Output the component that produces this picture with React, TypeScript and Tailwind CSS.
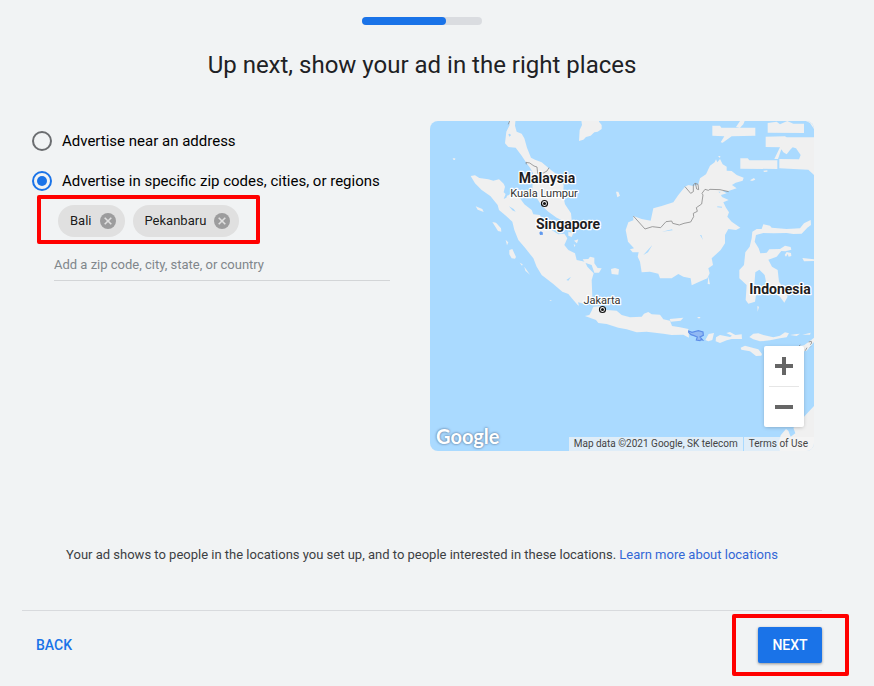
import { useState } from "react";

type Option = { id: string; label: string };

const options: Option[] = [
  { id: "address", label: "Advertise near an address" },
  { id: "regions", label: "Advertise in specific zip codes, cities, or regions" },
];

function Chip({ name, onRemove }: { name: string; onRemove: () => void }) {
  return (
    <li className="flex h-8 items-center gap-2 rounded-full bg-[#e0e0e0] pl-3 pr-[9px] text-[13px] text-black/90">
      {name}
      <button type="button" aria-label={`Remove ${name}`} onClick={onRemove} className="size-4">
        <svg viewBox="0 0 16 16" className="size-4">
          <circle cx="8" cy="8" r="8" fill="#9c9c9d" />
          <path d="M4.7 4.7l6.6 6.6M11.3 4.7l-6.6 6.6" stroke="#e0e0e0" strokeWidth="1.6" />
        </svg>
      </button>
    </li>
  );
}

function Capital({ x, y }: { x: number; y: number }) {
  return (
    <g>
      <circle cx={x} cy={y} r="3" fill="#fff" stroke="#111" strokeWidth="1.2" />
      <circle cx={x} cy={y} r="1.5" fill="#111" />
    </g>
  );
}

function MapDrawing() {
  return (
    <svg
      viewBox="430 121 384 330"
      preserveAspectRatio="xMidYMid slice"
      className="block h-full w-full font-[Roboto,sans-serif]"
      role="img"
      aria-label="Map of Indonesia and Malaysia"
    >
      <g transform="translate(425 115) scale(0.33333)" fill="#f0f0f0">
        {/* Malay peninsula */}
        <path d="M250 10L254 30L244 50L240 85L250 96L272 98L290 122L303 142L316 160L324 175L322 225L336 250L350 272L370 290L395 308L415 318L440 315L438 295L420 268L414 240L416 210L404 185L375 163L350 142L330 134L318 128L306 98L298 70L290 56L275 50L270 32L272 10Z" />
        <path d="M250 58l5 -2 3 5 -5 4z" fill="#aadaff" />
        {/* Vietnam */}
        <path d="M468 10L471 30L464 45L462 78L475 74L483 66L497 62L508 52L518 50L530 42L530 30L522 20L522 10Z" />
        {/* Sumatra */}
        <path d="M137 183L150 181L163 189L190 193L205 197L222 193L236 206L240 215L236 232L248 242L260 234L285 250L298 268L320 285L325 298L345 300L352 318L370 330L380 345L400 358L418 356L427 370L418 390L430 405L450 415L455 435L480 440L487 455L506 475L500 495L502 545L485 558L480 567L459 562L462 572L458 570L445 555L430 537L412 530L385 507L350 480L335 455L325 430L300 398L280 375L268 345L262 320L240 300L222 285L218 270L196 243L170 225L150 205Z" />
        <path d="M236 252l8 -20 6 -2 -6 18zM252 274l14 8 6 8 -10 -4zM424 495l14 -10 -8 12z" fill="#aadaff" />
        <path d="M152 274L172 282L176 291L158 284ZM202 321L213 323L228 340L229 350L219 348ZM242 375L250 382L246 391ZM253 405L262 402L273 426L270 431L260 430L253 418ZM284 443L293 448L291 452ZM298 455L315 479L301 467ZM83 130L91 130L90 135L85 134Z" />
        <path d="M473 433L490 432L495 425L508 428L508 445L518 459L530 460L522 473L508 473L500 450L480 443ZM558 462L570 459L582 463L580 479L560 477ZM573 230L580 230L585 242L577 247ZM447 377L460 373L456 385ZM446 388L451 390L449 397ZM373 555L380 555L378 558ZM430 350L445 355L440 366L430 362Z" />
        <path d="M250 28L254 18M304 148L303 142L314 144L327 153L336 156L338 175L355 174L366 168L372 158" fill="none" stroke="#777" strokeWidth="2" />
        <path d="M343 353l4 -4 6 3 1 7 -9 1z" fill="#6099ee" />
      </g>

      <g transform="translate(620 115) scale(0.33333)" fill="#f0f0f0">
        {/* Borneo */}
        <path d="M40 303L65 312L92 317L100 280L125 273L160 262L175 240L195 215L205 210L220 213L235 208L240 190L258 178L270 152L284 142L288 133L292 142L300 132L308 148L320 155L320 167L335 168L350 180L371 188L368 197L347 203L336 210L350 220L325 228L308 228L320 235L303 240L306 246L326 255L310 262L318 278L327 292L322 305L335 320L361 338L348 345L325 342L315 360L315 385L302 405L275 430L279 450L265 460L269 475L262 490L238 500L215 511L212 490L190 485L175 477L155 490L120 490L115 476L90 470L65 472L60 440L53 425L56 412L38 412L30 403L42 400L24 380L17 345L25 322L40 316Z" />
        <path d="M70 420L97 390L84 412ZM126 350L156 343L158 346ZM240 360L244 360L249 375ZM292 274L306 275L306 278L292 277ZM295 230L301 230L300 234Z" fill="#aadaff" />
        <path d="M265 484L270 508L263 507Z" />
        <path d="M40 303L75 342L97 335L122 338L138 320L155 318L158 325L178 330L192 325L212 321L221 305L220 295L232 289L229 278L245 267L249 240L246 235L255 223L265 226L270 223L300 224L326 230M195 215L212 235L220 230L220 210L226 204L230 222L236 224L234 208L226 205" fill="none" stroke="#8c8c8c" strokeWidth="2.5" />
        {/* Sulawesi */}
        <path d="M397 350L410 342L425 342L430 328L450 332L455 338L500 342L540 340L552 325L572 315L573 330L562 338L545 356L520 357L500 354L460 355L430 354L408 360L404 380L416 400L421 415L440 413L448 403L480 402L495 392L512 396L514 404L496 409L484 408L470 425L445 434L456 455L473 465L477 500L490 520L503 545L493 563L480 545L460 530L440 510L434 480L418 464L406 472L403 510L408 540L405 560L385 566L377 555L380 510L358 490L358 465L372 450L376 412L389 395L395 370Z" />
        <path d="M494 420L500 411L513 414L514 423L506 425L503 417L498 425ZM547 429L582 433L582 438L552 439ZM412 573L417 575L413 590Z" />
        {/* Philippines */}
        <path d="M277 32L300 32L304 38L406 38L406 62L335 64L308 83L302 82L313 64L277 62ZM348 36L360 18L374 18L370 28L360 38ZM443 24L470 20L480 28L502 18L520 26L552 26L552 54L443 53ZM437 65L495 64L500 67L582 67L582 180L565 164L478 160L478 132L537 133L542 120L528 100L518 97L510 105L500 118L490 112L484 103L474 132L463 132L480 97L437 96ZM361 130L383 130L388 136L472 136L472 162L361 161ZM558 18L582 18L582 42L570 24ZM390 196L402 189L406 194L396 198ZM430 167L442 166L442 170L432 171ZM294 123L301 123L300 129Z" />
      </g>

      <g transform="translate(620 280) scale(0.33333)" fill="#f0f0f0">
        {/* Java */}
        <path d="M-105 108L-92 105L-85 92L-80 80L-55 78L-40 90L-10 92L5 105L30 112L65 110L72 101L85 96L95 103L120 104L130 118L150 122L156 138L180 142L205 147L207 173L190 164L155 165L130 161L80 155L50 157L20 148L-5 143L-40 132L-65 129L-72 120Z" />
        <path d="M149 117L190 113L182 122L152 125ZM232 111L241 111L240 115L234 115Z" />
        {/* Lesser Sunda islands */}
        <path d="M256 180L266 162L282 159L277 180L265 184ZM288 172L300 165L330 171L336 167L319 159L330 156L346 165L365 163L366 177L335 177L320 181L300 189L287 184ZM388 171L400 161L415 160L430 165L460 172L480 167L495 157L507 160L500 172L480 175L450 181L420 184L400 178ZM510 165L530 162L540 161L530 168ZM547 164L572 158L570 164ZM362 203L375 197L400 204L415 208L426 222L424 227L408 228L390 214L364 209ZM525 200L552 196L566 186L582 173L582 186L560 212L552 214Z" />
        <path d="M537 198l4 -3M556 212l5 -9M566 186l8 -2 1 6 -5 4M570 202l2 -2" fill="none" stroke="#777" strokeWidth="2" />
        {/* Australia */}
        <path d="M583 377L568 393L552 410L545 430L520 443L526 460L512 470L505 452L498 447L482 466L474 495L480 513L583 513Z" />
        {/* Bali */}
        <path d="M206 153L216 157L235 152L249 156L250 166L240 171L248 180L243 179L240 182L229 180L232 171L222 167L213 164L206 157Z" fill="#91b9f3" stroke="#5c8de8" strokeWidth="3.5" />
      </g>

      <g textAnchor="middle" fill="#1d1d1f" stroke="#fff" strokeWidth="2.5" strokeLinejoin="round" paintOrder="stroke">
        <g fontSize="14" fontWeight="700">
          <text x="547" y="183">Malaysia</text>
          <text x="568" y="229">Singapore</text>
          <text x="780" y="294">Indonesia</text>
        </g>
        <g fontSize="11" fill="#333">
          <text x="544" y="197">Kuala Lumpur</text>
          <text x="602" y="304">Jakarta</text>
        </g>
      </g>
      <Capital x={544.5} y={203.5} />
      <Capital x={602.5} y={309.5} />
    </svg>
  );
}

function LocationMap() {
  return (
    <section aria-label="Map" className="relative h-[330px] w-[384px] shrink-0 overflow-hidden rounded-lg bg-[#aadaff]">
      <MapDrawing />
      <span className="absolute bottom-px left-[6px] font-[Lato,sans-serif] text-[20px] font-bold leading-7 text-white [text-shadow:0_0_2px_#5b7fa5,0_0_3px_#7d9dbd]">
        Google
      </span>
      <div className="absolute bottom-6 right-[10px] flex w-10 flex-col items-center rounded-xs bg-white shadow-[0_1px_4px_-1px_rgba(0,0,0,0.3)]">
        <button type="button" aria-label="Zoom in" className="flex size-10 items-center justify-center">
          <svg viewBox="0 0 18 18" className="size-[18px]" fill="#666">
            <path d="M7 0h4v7h7v4h-7v7H7v-7H0V7h7z" />
          </svg>
        </button>
        <span className="h-px w-[30px] bg-[#e6e6e6]" />
        <button type="button" aria-label="Zoom out" className="flex size-10 items-center justify-center">
          <svg viewBox="0 0 18 18" className="size-[18px]" fill="#666">
            <path d="M0 7h18v4H0z" />
          </svg>
        </button>
      </div>
      <div className="absolute bottom-0 right-0 flex gap-px text-[10px] leading-[14px] text-[#444]">
        <span className="bg-[#f5f5f5]/70 px-[5px]">Map data ©2021 Google, SK telecom</span>
        <a href="#terms" className="bg-[#f5f5f5]/70 pl-[5px] pr-[6px]">
          Terms of Use
        </a>
      </div>
    </section>
  );
}

export default function App() {
  const [selected, setSelected] = useState("regions");
  const [places, setPlaces] = useState(["Bali", "Pekanbaru"]);

  return (
    <main className="min-h-screen bg-[#f1f3f4] pb-6 pl-[22px] pr-[52px] pt-[17px] font-[Roboto,sans-serif]">
      <div
        role="progressbar"
        aria-label="Setup progress"
        aria-valuenow={70}
        aria-valuemin={0}
        aria-valuemax={100}
        className="mx-auto h-2 w-[120px] rounded-full bg-[#dadce0]"
      >
        <div className="h-2 w-[70%] rounded-full bg-[#1a73e8]" />
      </div>

      <h1 className="mt-6 text-center text-[24px] leading-8 text-[#202124]">
        Up next, show your ad in the right places
      </h1>

      <div className="mt-10 flex gap-10 pl-[10px] pr-2">
        <form className="min-w-0 flex-1 pt-[10px]">
          <div role="radiogroup" aria-label="Where to advertise" className="flex flex-col gap-5">
            {options.map(({ id, label }) => (
              <label key={id} className="flex h-5 items-center gap-[10px] whitespace-nowrap text-[15px] text-black">
                <input
                  type="radio"
                  name="target"
                  value={id}
                  checked={selected === id}
                  onChange={() => setSelected(id)}
                  className="flex size-5 shrink-0 appearance-none items-center justify-center rounded-full border-2 border-[#6b6d70] before:size-[10px] before:rounded-full checked:border-[#1a73e8] checked:before:bg-[#1a73e8]"
                />
                {label}
              </label>
            ))}
          </div>

          <ul className="ml-[5px] mt-1 flex w-fit gap-2 rounded-xs border-4 border-[#ff0000] px-[17px] pb-[3px] pt-[6px]">
            {places.map((name) => (
              <Chip key={name} name={name} onRemove={() => setPlaces(places.filter((p) => p !== name))} />
            ))}
          </ul>

          <div className="pl-[22px] pt-[6px]">
            <input
              type="text"
              aria-label="Add a location"
              placeholder="Add a zip code, city, state, or country"
              className="block h-[31px] w-full border-b border-[#d3d5d7] bg-transparent pb-[2px] text-[13px] text-black outline-none placeholder:text-[#80868b]"
            />
          </div>
        </form>

        <LocationMap />
      </div>

      <p className="mt-[94px] text-center text-[13px] leading-5 text-[#3c4043]">
        Your ad shows to people in the locations you set up, and to people interested in these locations.{" "}
        <a href="#locations" className="text-[#3367d6]">
          Learn more about locations
        </a>
      </p>

      <footer className="mt-[45px] flex items-center justify-between border-t border-[#d8dadd] pt-4">
        <button type="button" className="h-9 px-[14px] text-[14px] font-medium text-[#1a73e8]">
          BACK
        </button>
        <div className="relative">
          <button
            type="button"
            className="h-9 w-16 rounded-xs bg-[#1a73e8] text-[14px] font-medium text-white shadow-[0_1px_3px_rgba(0,0,0,0.4)]"
          >
            NEXT
          </button>
          <span className="pointer-events-none absolute -bottom-[13px] -left-[26px] -right-[27px] -top-[13px] rounded-xs border-4 border-[#ff0000]" />
        </div>
      </footer>
    </main>
  );
}
